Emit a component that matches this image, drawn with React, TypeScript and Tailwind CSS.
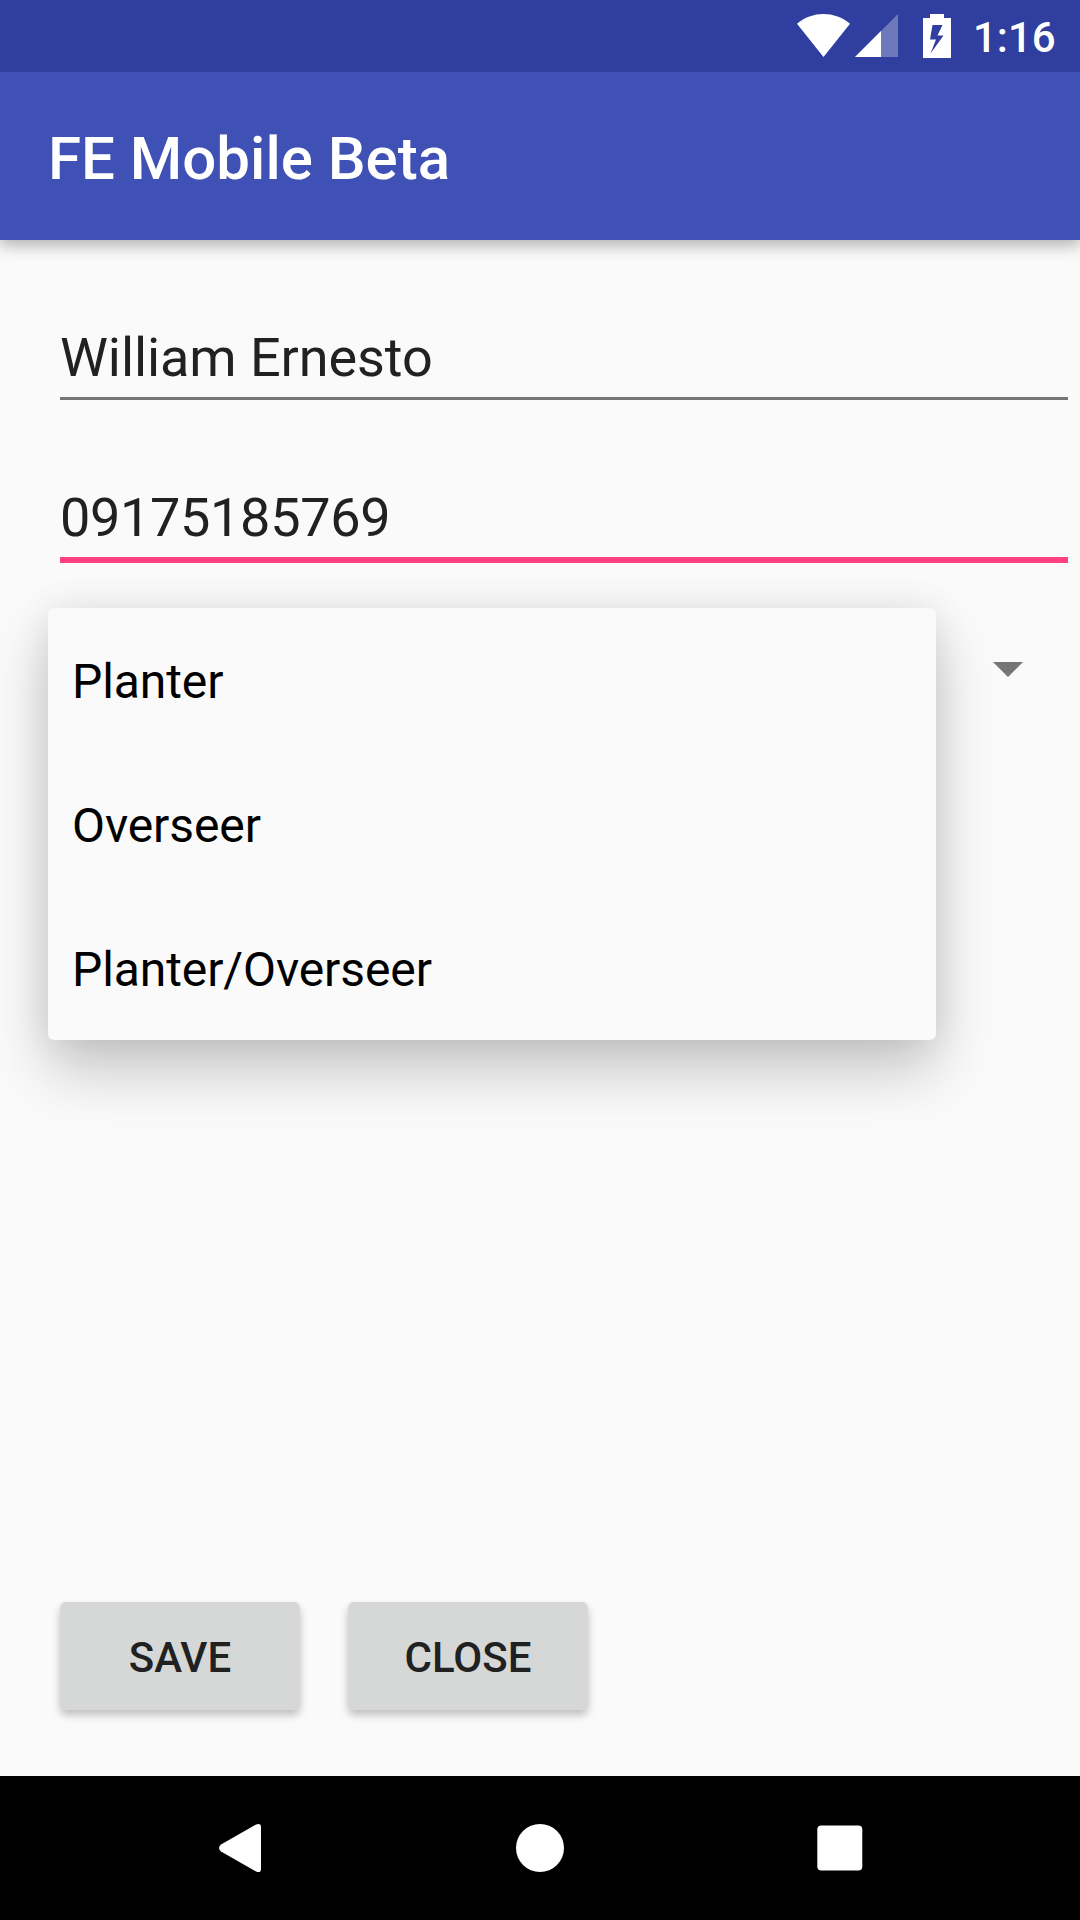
const roles = ['Planter', 'Overseer', 'Planter/Overseer'];

function StatusBar() {
  return (
    <div className="relative z-20 h-[72px] bg-[#303f9f] text-white">
      <svg className="absolute inset-0" width="1080" height="72" viewBox="0 0 1080 72" fill="#fff">
        <path d="M797 23.7C812 10.6 835 10.6 850 23.7L823.5 57Z" />
        <path d="M898 14V57H855Z" opacity=".3" />
        <path d="M881 31V57H855Z" />
        <path fillRule="evenodd" d="M930 18V14H944V18H951V58H923V18ZM932.5 25L930 39.5H936L930.5 53.5L943.5 35.5H937.5L942.5 25Z" />
      </svg>
      <span className="absolute left-[973px] top-[13px] text-[42px] leading-[50px] font-medium">1:16</span>
    </div>
  );
}

export default function App() {
  return (
    <div className="flex h-[1920px] w-[1080px] flex-col overflow-hidden bg-[#fafafa] font-['Roboto',sans-serif]">
      <StatusBar />
      <header className="relative z-10 flex h-[168px] items-center bg-[#3f51b5] px-12 pt-1.5 text-[60px] font-medium text-white shadow-[0_6px_14px_rgba(0,0,0,0.28)]">
        <h1>FE Mobile Beta</h1>
      </header>
      <main className="relative flex flex-1 flex-col pl-[60px]">
        <div className="mr-3 mt-[72px] h-[88px] border-b-[3px] border-[#757575] pt-[10px] text-[54px] leading-[72px] tracking-[-0.08px] text-[#212121]">William Ernesto</div>
        <div className="mr-3 mt-[72px] h-[91px] border-b-[6px] border-[#ff4081] pt-[10px] text-[54px] leading-[72px] tracking-[-0.33px] text-[#212121]">09175185769</div>
        <svg className="absolute left-[993px] top-[422px]" width="30" height="15"><path d="M0 0H30L15 15Z" fill="#757575" /></svg>
        <ul className="absolute left-12 top-[368px] w-[888px] rounded-[6px] bg-[#fafafa] text-[48px] tracking-[-0.1px] text-black shadow-[0_30px_60px_rgba(0,0,0,0.21),0_0_36px_rgba(0,0,0,0.08)]">
          {roles.map((role) => (
            <li key={role} className="flex h-36 items-center px-6 pt-1">{role}</li>
          ))}
        </ul>
        <div className="mb-[66px] mt-auto flex gap-12 text-[42px] font-medium text-[#212121]">
          <button className="h-[108px] w-60 rounded-[6px] bg-[#d6d7d7] pt-0.5 shadow-[0_5px_8px_rgba(0,0,0,0.24)]">SAVE</button>
          <button className="h-[108px] w-60 rounded-[6px] bg-[#d6d7d7] pt-0.5 shadow-[0_5px_8px_rgba(0,0,0,0.24)]">CLOSE</button>
        </div>
      </main>
      <nav className="h-36 bg-black">
        <svg width="1080" height="144" viewBox="0 0 1080 144" fill="#fff">
          <path d="M221 68.5L256 48.5Q261 46.5 261 51V93Q261 97.5 256 95.5L221 75.5Q217 72 221 68.5Z" />
          <circle cx="540" cy="72" r="24" />
          <rect x="817.3" y="49.5" width="45" height="45" rx="4" />
        </svg>
      </nav>
    </div>
  );
}
